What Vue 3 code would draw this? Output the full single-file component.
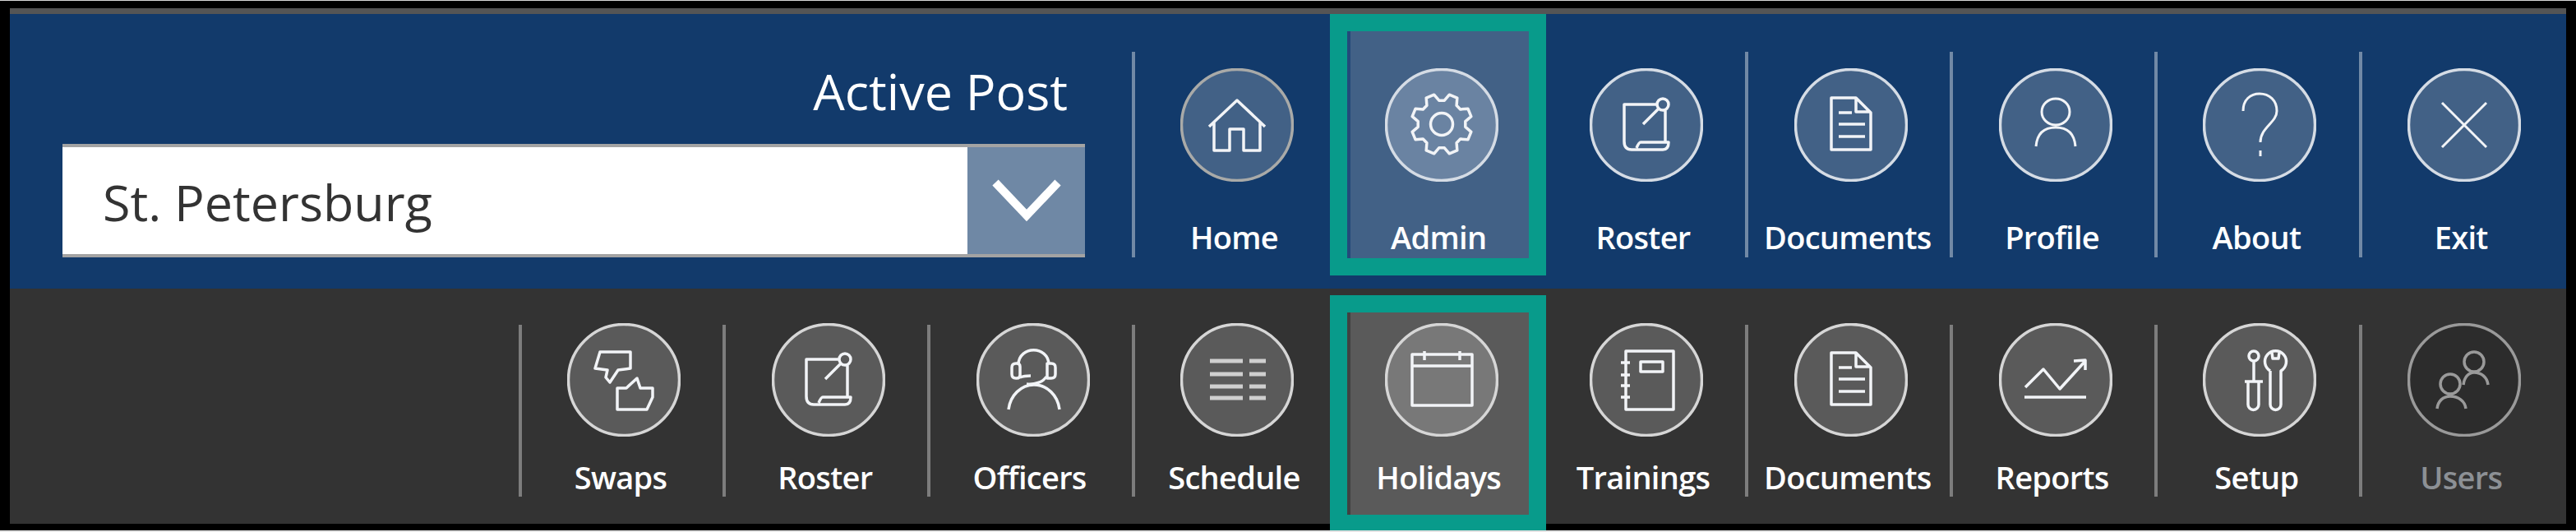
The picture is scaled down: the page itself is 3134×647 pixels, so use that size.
<script setup>
    // 齿轮图标的路径，8 个齿
    const gearPath = () => {
        const cx = 69;
        const cy = 68;
        let d = '';
        for (let i = 0; i < 8; i++) {
            const a = 22.5 + i * 45;
            const pts = [
                [29, a - 16],
                [37, a - 8],
                [37, a + 8],
                [29, a + 16],
            ];
            pts.forEach(([r, deg]) => {
                const rad = (deg * Math.PI) / 180;
                const x = (cx + r * Math.sin(rad)).toFixed(1);
                const y = (cy - r * Math.cos(rad)).toFixed(1);
                d += `${d ? 'L' : 'M'}${x} ${y} `;
            });
        }
        return `${d}Z M82.5 68 a13.5 13.5 0 1 0 -27 0 a13.5 13.5 0 1 0 27 0`;
    };

    const rosterIcon =
        'M82 44 H42 V89 Q42 99 51 99 H89 Q96 99 96 90 H62 Q60 90 57 97 M92 51 V90 M65 68 L84 49 M96 44 a7 7 0 1 0 -14 0 a7 7 0 1 0 14 0';
    const docIcon =
        'M45 99 V36 H75 L93 54 V99 Z M75 36 V53 H93 M54 54 H70 M54 68 H86 M54 83 H86';

    const topItems = [
        {
            label: 'Home',
            dim: true,
            d: 'M35 71 L69 39 L103 71 M41 66 V100 H60 V74 H77 V100 H97 V66',
        },
        { label: 'Admin', active: true, d: gearPath() },
        { label: 'Roster', d: rosterIcon },
        { label: 'Documents', d: docIcon },
        {
            label: 'Profile',
            sw: 3,
            d: 'M86 53 a17 16 0 1 0 -34 0 a17 16 0 1 0 34 0 M45 95 Q47 72 69 72 Q91 72 93 95',
        },
        {
            label: 'About',
            sw: 3,
            d: 'M49 52 C49 38 58 31 69 31 C81 31 90 39 90 52 C90 66 70 72 70 90 M70 100 V107',
        },
        { label: 'Exit', sw: 3, d: 'M42 42 L96 96 M96 42 L42 96' },
    ];

    const bottomItems = [
        {
            label: 'Swaps',
            d: 'M40 35 H77 V55 L62 57 L52 72 L47 66 L49 57 L34 55 Z M61 79 H72 L85 67 L89 79 H104 V90 L97 105 H61 Z',
        },
        { label: 'Roster', d: rosterIcon },
        {
            label: 'Officers',
            d: 'M51 50 C52 27 87 27 88 50 M48 49 H49 Q53 49 53 53 V63 Q53 67 49 67 H48 Q43 67 43 62 V54 Q43 49 48 49 Z M86 49 H91 Q96 49 96 54 V62 Q96 67 91 67 H86 Z M53 66 Q58 64 66 64 M85 65 C81 72 70 75 61 74 M39 105 C41 88 54 75 70 75 C86 75 99 88 101 105',
        },
        {
            label: 'Schedule',
            sw: 5,
            soft: true,
            d: 'M36 46 H76 M84 46 H104 M36 62 H76 M84 62 H104 M36 77 H76 M84 77 H104 M36 91 H76 M84 91 H104',
        },
        {
            label: 'Holidays',
            active: true,
            d: 'M33 38 H106 V100 H33 Z M33 52 H106 M48 34 V45 M91 34 V45',
        },
        {
            label: 'Trainings',
            d: 'M44 34 H102 V105 H44 Z M38 48 H49 M38 63 H49 M38 76 H49 M38 90 H49 M62 47 H89 V59 H62 Z',
        },
        { label: 'Documents', d: docIcon },
        {
            label: 'Reports',
            d: 'M31 90 H106 M32 78 L54 56 L74 80 L105 46 M91 46 L105 45 V57',
        },
        {
            label: 'Setup',
            d: 'M68 40 a6 6 0 1 0 -12 0 a6 6 0 1 0 12 0 M62 47 V71 M51 71 H73 M55 71 V99 a6.5 6.5 0 0 0 13 0 V71 M82 58 V99 a6.5 6.5 0 0 0 13 0 V58 A13 13 0 1 0 82 58 M84 36 L85 43 H92 L93 36',
        },
        {
            label: 'Users',
            disabled: true,
            d: 'M93 47 a12 12 0 1 0 -24 0 a12 12 0 1 0 24 0 M68 75 C69 66 74 60 81 60 C90 60 97 66 98 75 M64 74 a12 12 0 1 0 -24 0 a12 12 0 1 0 24 0 M36 104 C37 95 43 89 52 89 C62 89 70 95 71 104',
        },
    ];
</script>

<template>
    <div class="frame">
        <div class="bar bar-top">
            <div class="post">
                <div class="post-label">Active Post</div>
                <div class="post-select">
                    <div class="post-value">St. Petersburg</div>
                    <div class="post-arrow">
                        <svg width="84" height="52" viewBox="0 0 84 52">
                            <path d="M4 4 L42 44 L80 4" fill="none" stroke="#fff" stroke-width="10" />
                        </svg>
                    </div>
                </div>
            </div>
            <nav class="nav">
                <div
                    v-for="item in topItems"
                    :key="item.label"
                    class="nav-item"
                    :class="{ active: item.active, dim: item.dim }"
                >
                    <svg class="nav-icon" width="138" height="138" viewBox="0 0 138 138">
                        <circle class="nav-ring" cx="69" cy="69" r="67.5" />
                        <path class="nav-glyph" :d="item.d" :stroke-width="item.sw || 3.5" />
                    </svg>
                    <span class="nav-label">{{ item.label }}</span>
                </div>
            </nav>
        </div>

        <div class="bar bar-bottom">
            <nav class="nav">
                <div
                    v-for="item in bottomItems"
                    :key="item.label"
                    class="nav-item"
                    :class="{ active: item.active, disabled: item.disabled, soft: item.soft }"
                >
                    <svg class="nav-icon" width="138" height="138" viewBox="0 0 138 138">
                        <circle class="nav-ring" cx="69" cy="69" r="67.5" />
                        <path class="nav-glyph" :d="item.d" :stroke-width="item.sw || 3.5" />
                    </svg>
                    <span class="nav-label">{{ item.label }}</span>
                </div>
            </nav>
        </div>
    </div>
</template>

<style>
    html,
    body {
        margin: 0;
        background: #000;
    }
</style>

<style scoped>
    .frame {
        box-sizing: border-box;
        width: 3134px;
        height: 647px;
        padding: 9px 12px 8px;
        background: #000;
        border-top: 1px solid #d8d8d8;
        border-bottom: 2px solid #e4e4e4;
        font-family: 'Open Sans', 'Liberation Sans', sans-serif;
        color: #fff;
        overflow: hidden;
    }

    .bar {
        display: flex;
        box-sizing: border-box;
        padding-right: 3.4px;
    }

    .bar-top {
        height: 341px;
        justify-content: space-between;
        padding-top: 46px;
        padding-bottom: 38px;
        padding-left: 64px;
        background: #123a6b;
        border-top: 7px solid #555;
        --sep: #7189a6;
        --ring-fill: #426186;
        --ring-stroke: #d5dce5;
        --active-bg: #426186;
        --active-edge: #24497a;
        --active-ring: #6a83a2;
    }

    .bar-bottom {
        height: 286px;
        justify-content: flex-end;
        padding-top: 44px;
        padding-bottom: 33px;
        background: #333;
        --sep: #7d7d7d;
        --ring-fill: #5a5a5a;
        --ring-stroke: #d6d6d6;
        --active-bg: #5a5a5a;
        --active-edge: #414141;
        --active-ring: #787878;
    }

    .post {
        display: flex;
        flex-direction: column;
        justify-content: flex-end;
        width: 1244px;
    }

    .post-label {
        align-self: flex-end;
        margin-right: 21px;
        margin-bottom: 26px;
        font-size: 61px;
        line-height: 76px;
    }

    .post-select {
        display: flex;
        box-sizing: border-box;
        height: 138px;
        background: #fff;
        border-top: 4px solid #a3a3a3;
        border-bottom: 4px solid #a3a3a3;
    }

    .post-value {
        flex: 1;
        padding-left: 49px;
        font-size: 61px;
        line-height: 134px;
        color: #333;
    }

    .post-arrow {
        display: flex;
        align-items: center;
        justify-content: center;
        width: 143px;
        background: #6f88a5;
    }

    .nav {
        display: flex;
    }

    .nav-item {
        display: flex;
        flex-direction: column;
        align-items: center;
        box-sizing: border-box;
        width: 248.8px;
        padding-right: 4px;
        border-left: 4px solid var(--sep);
    }

    .nav-icon {
        flex: none;
        margin-top: 20px;
        margin-left: 8px;
    }

    .bar-bottom .nav-icon {
        margin-top: -2px;
    }

    .nav-ring {
        fill: var(--ring-fill);
        stroke: var(--ring-stroke);
        stroke-width: 3.5;
    }

    .nav-glyph {
        fill: none;
        stroke: #f2f4f7;
        stroke-linejoin: round;
    }

    .nav-item.soft .nav-glyph {
        stroke: #cfcfcf;
    }

    .nav-label {
        margin-top: auto;
        font-size: 38px;
        font-weight: 600;
        line-height: 50px;
        letter-spacing: -0.7px;
        white-space: nowrap;
    }

    .bar-bottom .nav-label {
        margin-bottom: -1px;
    }

    .nav-item.dim .nav-ring {
        stroke: #a9aaa8;
    }

    .nav-item.disabled .nav-ring {
        fill: #2c2c2c;
        stroke: #9a9a9a;
    }

    .nav-item.disabled .nav-glyph {
        stroke: #9a9a9a;
    }

    .nav-item.disabled .nav-label {
        color: #8c9095;
    }

    .nav-item.active {
        position: relative;
        z-index: 1;
    }

    /* 选中项的高亮块和绿色框 */
    .nav-item.active::before {
        content: '';
        position: absolute;
        z-index: -1;
        left: 9px;
        width: 221px;
        background: var(--active-bg);
        box-shadow: inset 4px 0 0 var(--active-edge);
        outline: 21px solid #089b8b;
    }

    .bar-top .nav-item.active::before {
        top: -25px;
        height: 276px;
    }

    .bar-bottom .nav-item.active::before {
        top: -15px;
        height: 246px;
    }

    .nav-item.active .nav-ring {
        fill: var(--active-ring);
    }
</style>
